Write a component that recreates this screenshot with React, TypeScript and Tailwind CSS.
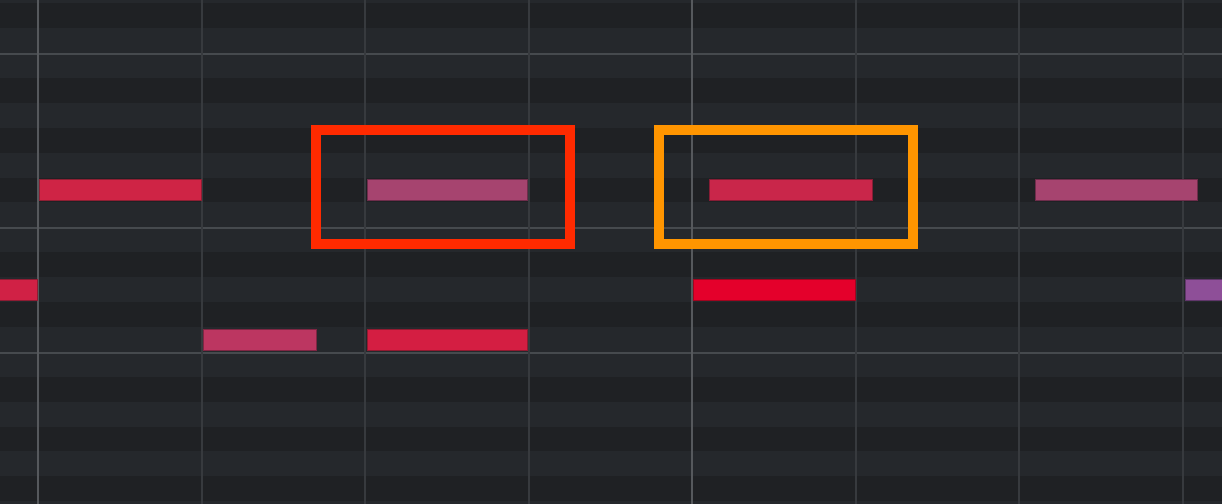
import React from "react";

const ROW_H = 24.92;
const TOP = -21.76;
const BEAT_X0 = 38;
const BEAT_W = 163.5;

// Pitch lanes from top; sharps/flats get the darker lane
const ROWS: string[] = [
  "D", "Db", "C",
  "B", "Bb", "A", "Ab", "G", "Gb", "F", "E", "Eb", "D", "Db", "C",
  "B", "Bb", "A", "Ab", "G", "Gb", "F",
];

type Note = { row: number; x1: number; x2: number; fill: string; edge: string };

const NOTES: Note[] = [
  { row: 8, x1: 39, x2: 202, fill: "#cf2445", edge: "#8e1f33" },
  { row: 8, x1: 367, x2: 528, fill: "#a6446f", edge: "#6e2d4b" },
  { row: 8, x1: 709, x2: 873, fill: "#c9264a", edge: "#861d35" },
  { row: 8, x1: 1035, x2: 1198, fill: "#a6446f", edge: "#6e2d4b" },
  { row: 12, x1: -2, x2: 38, fill: "#d02145", edge: "#8e1c33" },
  { row: 12, x1: 693, x2: 856, fill: "#e4002b", edge: "#a0051f" },
  { row: 12, x1: 1185, x2: 1226, fill: "#8e4f98", edge: "#60366a" },
  { row: 14, x1: 203, x2: 317, fill: "#bc3661", edge: "#7f2643" },
  { row: 14, x1: 367, x2: 528, fill: "#d41e42", edge: "#911a30" },
];

function Lane({ name }: { name: string }) {
  const black = name.length > 1;
  const octaveEdge = name === "B" || name === "E";
  return (
    <div
      className={`h-[24.92px] w-full shrink-0 box-border ${black ? "bg-[#1f2124]" : "bg-[#25282c]"} ${
        octaveEdge ? "border-t-2 border-[#464a4e]" : ""
      }`}
    />
  );
}

export default function App() {
  const beats = Array.from({ length: 8 }, (_, i) => i);
  return (
    <div className="relative w-[1222px] h-[504px] overflow-hidden bg-[#222528]">
      {/* pitch lanes */}
      <div className="flex flex-col -mt-[21.76px]">
        {ROWS.map((r, i) => (
          <Lane key={i} name={r} />
        ))}
      </div>

      {/* beat and bar lines */}
      {beats.map((b) => {
        const bar = b % 4 === 0;
        return (
          <div
            key={b}
            className={`absolute top-0 bottom-0 w-[2px] ${bar ? "bg-[#56595d]" : "bg-[#373a3e]"}`}
            style={{ left: BEAT_X0 + b * BEAT_W - 1 }}
          />
        );
      })}

      {/* notes */}
      {NOTES.map((n, i) => (
        <div
          key={i}
          className="absolute h-[22px] box-border border"
          style={{
            left: n.x1,
            width: n.x2 - n.x1,
            top: TOP + n.row * ROW_H + 1.5,
            background: n.fill,
            borderColor: n.edge,
          }}
        />
      ))}

      {/* selection markers */}
      <div className="absolute left-[311px] top-[125px] w-[264px] h-[124px] border-[10px] border-[#ff2a00]" />
      <div className="absolute left-[654px] top-[125px] w-[264px] h-[124px] border-[10px] border-[#ff9500]" />
    </div>
  );
}
